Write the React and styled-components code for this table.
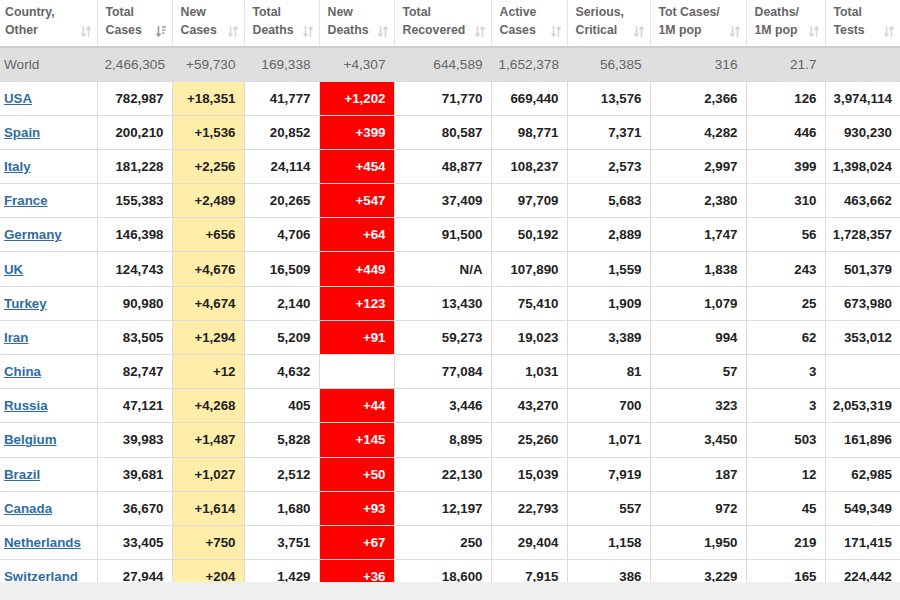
import React from 'react';
import styled, { createGlobalStyle } from 'styled-components';

const GlobalStyle = createGlobalStyle`
  html, body {
    margin: 0;
    padding: 0;
    background: #fff;
    font-family: "Liberation Sans", Arial, sans-serif;
  }
`;

const Page = styled.div`
  width: 900px;
  height: 600px;
  display: flex;
  flex-direction: column;
  overflow: hidden;
`;

const Scroller = styled.div`
  height: 582px;
  overflow: hidden;
`;

const ScrollBar = styled.div`
  height: 18px;
  background: #efefef;
`;

const Table = styled.table`
  width: 900px;
  table-layout: fixed;
  border-collapse: collapse;
  font-size: 13.3px;
`;

const Th = styled.th`
  height: 46px;
  padding: 0 6px 0 ${(p) => (p.$first ? '5px' : '8px')};
  border-left: 1px solid #e4e4e4;
  border-bottom: 2px solid #cdcdcd;
  vertical-align: top;
  text-align: left;
  &:first-child { border-left: none; }
`;

const HeadInner = styled.div`
  height: 46px;
  display: flex;
  justify-content: space-between;
  align-items: flex-end;
  padding-bottom: 8px;
  box-sizing: border-box;
`;

const HeadText = styled.span`
  font-size: 12.3px;
  font-weight: bold;
  color: #666;
  line-height: 17.5px;
  margin-bottom: -1px;
`;

const WorldRow = styled.tr`
  height: 34px;
  background: #dfdfdf;
  td {
    color: #666;
    font-weight: normal;
    font-size: 13.6px;
  }
`;

const Row = styled.tr`
  height: 34.2px;
`;

const Td = styled.td`
  padding: 0 8px 0 7px;
  text-align: ${(p) => (p.$left ? 'left' : 'right')};
  border: 1px solid #dcdcdc;
  border-top: none;
  font-weight: bold;
  color: #222;
  white-space: nowrap;
  overflow: hidden;
  background: ${(p) => (p.$tone === 'yellow' ? '#ffeeaa' : p.$tone === 'red' ? '#ff0000' : 'transparent')};
  ${(p) => p.$tone === 'red' && 'color: #fff;'}
  &:first-child { border-left: none; padding-left: 4px; }
  &:last-child { border-right: none; }
`;

const CountryLink = styled.a`
  color: #2f6ca6;
  text-decoration: underline;
  font-weight: bold;
`;

const SortIcon = ({ active }) => {
  const c = active ? '#9a9a9a' : '#d6d6d6';
  return (
    <svg width="10" height="13" viewBox="0 0 10 13" style={{ flexShrink: 0 }}>
      <path d="M2.5 1v10M0.5 8.5l2 2.5 2-2.5" stroke={c} strokeWidth="1.6" fill="none" />
      {active ? (
        <path d="M6 2h4M6 5h3.2M6 8h2.4" stroke={c} strokeWidth="1.6" fill="none" />
      ) : (
        <path d="M7.5 12V2M5.5 4.5l2-2.5 2 2.5" stroke={c} strokeWidth="1.6" fill="none" />
      )}
    </svg>
  );
};

const columns = [
  { w: 97, t: ['Country,', 'Other'] },
  { w: 75, t: ['Total', 'Cases'], active: true },
  { w: 72, t: ['New', 'Cases'] },
  { w: 75, t: ['Total', 'Deaths'] },
  { w: 75, t: ['New', 'Deaths'] },
  { w: 97, t: ['Total', 'Recovered'] },
  { w: 76, t: ['Active', 'Cases'] },
  { w: 83, t: ['Serious,', 'Critical'] },
  { w: 96, t: ['Tot Cases/', '1M pop'] },
  { w: 79, t: ['Deaths/', '1M pop'] },
  { w: 75, t: ['Total', 'Tests'] },
];

const world = ['World', '2,466,305', '+59,730', '169,338', '+4,307', '644,589', '1,652,378', '56,385', '316', '21.7', ''];

const rows = [
  ['USA', '782,987', '+18,351', '41,777', '+1,202', '71,770', '669,440', '13,576', '2,366', '126', '3,974,114'],
  ['Spain', '200,210', '+1,536', '20,852', '+399', '80,587', '98,771', '7,371', '4,282', '446', '930,230'],
  ['Italy', '181,228', '+2,256', '24,114', '+454', '48,877', '108,237', '2,573', '2,997', '399', '1,398,024'],
  ['France', '155,383', '+2,489', '20,265', '+547', '37,409', '97,709', '5,683', '2,380', '310', '463,662'],
  ['Germany', '146,398', '+656', '4,706', '+64', '91,500', '50,192', '2,889', '1,747', '56', '1,728,357'],
  ['UK', '124,743', '+4,676', '16,509', '+449', 'N/A', '107,890', '1,559', '1,838', '243', '501,379'],
  ['Turkey', '90,980', '+4,674', '2,140', '+123', '13,430', '75,410', '1,909', '1,079', '25', '673,980'],
  ['Iran', '83,505', '+1,294', '5,209', '+91', '59,273', '19,023', '3,389', '994', '62', '353,012'],
  ['China', '82,747', '+12', '4,632', '', '77,084', '1,031', '81', '57', '3', ''],
  ['Russia', '47,121', '+4,268', '405', '+44', '3,446', '43,270', '700', '323', '3', '2,053,319'],
  ['Belgium', '39,983', '+1,487', '5,828', '+145', '8,895', '25,260', '1,071', '3,450', '503', '161,896'],
  ['Brazil', '39,681', '+1,027', '2,512', '+50', '22,130', '15,039', '7,919', '187', '12', '62,985'],
  ['Canada', '36,670', '+1,614', '1,680', '+93', '12,197', '22,793', '557', '972', '45', '549,349'],
  ['Netherlands', '33,405', '+750', '3,751', '+67', '250', '29,404', '1,158', '1,950', '219', '171,415'],
  ['Switzerland', '27,944', '+204', '1,429', '+36', '18,600', '7,915', '386', '3,229', '165', '224,442'],
];

// yellow for new cases, red for new deaths (only if there is a value)
const toneFor = (i, v) => {
  if (i === 2) return 'yellow';
  if (i === 4 && v) return 'red';
  return undefined;
};

const App = () => (
  <Page>
    <GlobalStyle />
    <Scroller>
      <Table>
        <colgroup>
          {columns.map((c, i) => <col key={i} style={{ width: c.w }} />)}
        </colgroup>
        <thead>
          <tr>
            {columns.map((c, i) => (
              <Th key={i} $first={i === 0}>
                <HeadInner>
                  <HeadText>{c.t[0]}<br />{c.t[1]}</HeadText>
                  <SortIcon active={c.active} />
                </HeadInner>
              </Th>
            ))}
          </tr>
        </thead>
        <tbody>
          <WorldRow>
            {world.map((v, i) => <Td key={i} $left={i === 0}>{v}</Td>)}
          </WorldRow>
          {rows.map((r) => (
            <Row key={r[0]}>
              {r.map((v, i) => (
                <Td key={i} $left={i === 0} $tone={toneFor(i, v)}>
                  {i === 0 ? <CountryLink href="#">{v}</CountryLink> : v}
                </Td>
              ))}
            </Row>
          ))}
        </tbody>
      </Table>
    </Scroller>
    <ScrollBar />
  </Page>
);

export default App;
